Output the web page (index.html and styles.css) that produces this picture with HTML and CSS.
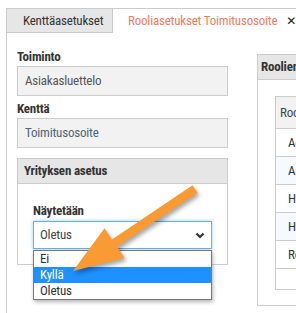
FILE: index.html
```html
<!DOCTYPE html>
<html>
<head>
  <title>Rooliasetukset</title>
  <link rel="stylesheet" href="styles.css">
</head>
<body>
  <div class="wrap">
    <div class="tabs">
      <div class="tab">Kenttäasetukset</div>
      <div class="tab active">Rooliasetukset Toimitusosoite <span class="close">&#x2715;</span></div>
    </div>

    <div class="tabpanel">
      <div class="col-left">
        <label class="field-label">Toiminto</label>
        <div class="field-input">Asiakasluettelo</div>

        <label class="field-label second">Kenttä</label>
        <div class="field-input link">Toimitusosoite</div>

        <div class="box">
          <div class="box-header">Yrityksen asetus</div>
          <div class="box-body">
            <label class="field-label">Näytetään</label>
            <div class="select">
              <span>Oletus</span>
              <svg class="chevron" width="10" height="7" viewBox="0 0 10 7">
                <polyline points="1.5,1.5 5,5 8.5,1.5" fill="none" stroke="#333" stroke-width="2.2"/>
              </svg>
              <ul class="options">
                <li>Ei</li>
                <li class="selected">Kyllä</li>
                <li>Oletus</li>
              </ul>
            </div>
          </div>
        </div>
      </div>

      <div class="col-right">
        <div class="box">
          <div class="box-header">Roolien oikeudet</div>
          <div class="box-body table-wrap">
            <table class="roles">
              <tr><th>Rooli</th></tr>
              <tr><td>Admin</td></tr>
              <tr class="stripe"><td>Asiakas</td></tr>
              <tr><td>Hyväksyjä</td></tr>
              <tr class="stripe"><td>Hyvityspäällikkö</td></tr>
              <tr><td>Resurssi</td></tr>
              <tr class="empty"><td></td></tr>
            </table>
          </div>
        </div>
      </div>
    </div>
  </div>

  <!-- callout arrow pointing at the highlighted option -->
  <svg class="arrow" width="296" height="313" viewBox="0 0 296 313">
    <polygon points="197.5,192.7 192.5,185.3 112,239.4 104.5,228.2 73,271 124.5,258 117,246.8" fill="#f99a32"/>
  </svg>
</body>
</html>
```

FILE: styles.css
```css
body, html {
  margin: 0;
  height: 100%;
  overflow: hidden;
  background: #fff;
}

body {
  font-family: "Liberation Sans Narrow", "Roboto Condensed", "DejaVu Sans Condensed", "Liberation Sans", sans-serif;
  font-size: 13px;
  letter-spacing: -0.2px;
  color: #333;
  position: relative;
}

.wrap {
  margin: 8px 0 0 6px;
}

.tabs {
  display: flex;
  border-top: 1px solid #ccc;
  height: 24px;
}

.tab {
  height: 24px;
  line-height: 23px;
  white-space: nowrap;
}

.tab:first-child {
  width: 89px;
  padding-left: 16px;
  background: #e6e6e6;
  border-left: 1px solid #ccc;
  border-right: 1px solid #ccc;
  border-bottom: 1px solid #ccc;
  height: 23px;
}

.tab.active {
  padding-left: 15px;
  color: #f47c5c;
}

.tab .close {
  color: #222;
  margin-left: 6px;
  font-family: "DejaVu Sans", sans-serif;
  font-size: 12px;
}

.tabpanel {
  display: flex;
  border-left: 1px solid #ccc;
  padding-left: 10px;
  height: 290px;
}

.col-left {
  width: 211px;
  flex-shrink: 0;
  padding-top: 16px;
}

.field-label {
  display: block;
  font-weight: bold;
  line-height: 16px;
  margin-bottom: 1px;
  color: #333;
}

.field-label.second {
  margin-top: 5px;
}

.field-input {
  height: 28px;
  line-height: 28px;
  border: 1px solid #ccc;
  background: #f2f2f2;
  padding: 0 7px;
  color: #555;
}

.field-input.link {
  color: #4e6479;
}

.box {
  border: 1px solid #ccc;
  margin-top: 10px;
}

.box-header {
  height: 24px;
  line-height: 24px;
  background: #e6e6e6;
  border-bottom: 1px solid #ccc;
  padding: 0 6px;
  font-weight: bold;
  white-space: nowrap;
}

.box-body {
  padding: 19px 15px 15px;
}

.box-body .field-label {
  margin-bottom: 2px;
}

.select {
  position: relative;
  height: 26px;
  line-height: 26px;
  border: 1px solid #66afe9;
  box-shadow: 0 0 4px rgba(102, 175, 233, 0.6);
  padding: 0 6px;
  color: #444;
}

.chevron {
  position: absolute;
  right: 6px;
  top: 10px;
}

.options {
  position: absolute;
  top: 28px;
  left: -1px;
  right: -1px;
  margin: 0;
  padding: 0;
  list-style: none;
  background: #fff;
  border: 1px solid #777;
  box-shadow: 1px 2px 4px rgba(0, 0, 0, 0.3);
  z-index: 2;
}

.options li {
  height: 16px;
  line-height: 15px;
  padding: 0 6px;
  color: #333;
}

.options li.selected {
  background: #1e90ff;
  color: #fff;
}

.col-right {
  width: 220px;
  flex-shrink: 0;
  margin-left: 29px;
  padding-top: 21px;
}

.col-right .box {
  margin-top: 0;
}

.col-right .box-header {
  padding-left: 3px;
}

.table-wrap {
  padding: 16px 0 15px 17px;
}

.roles {
  border-collapse: collapse;
  width: 200px;
}

.roles th,
.roles td {
  border: 1px solid #ccc;
  text-align: left;
  white-space: nowrap;
  font-weight: normal;
}

.roles th {
  height: 31px;
  padding: 0 4px;
  background: #f2f2f2;
  color: #444;
}

.roles td {
  height: 27px;
  padding: 0 12px;
}

.roles tr.stripe td {
  background: #f6f9fd;
}

.roles tr.empty td {
  height: 20px;
}

.arrow {
  position: absolute;
  left: 0;
  top: 0;
  pointer-events: none;
  filter: drop-shadow(2px 3px 2px rgba(0, 0, 0, 0.35));
  z-index: 5;
}
```
